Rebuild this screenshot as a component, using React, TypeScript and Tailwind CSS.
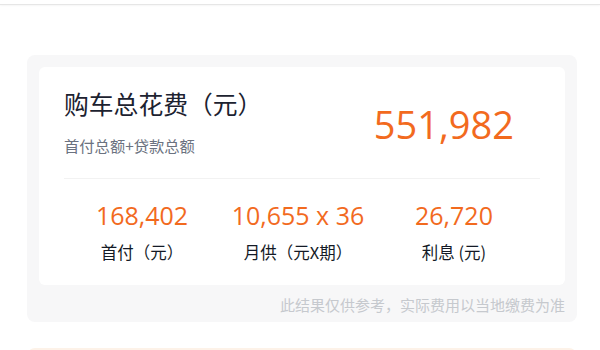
import React from "react";

const cjk = { fontFamily: '"Noto Sans CJK SC", "Noto Sans", sans-serif' };
const num = { fontFamily: '"Open Sans", "Noto Sans", sans-serif' };

export default function App() {
  const cols = [
    { v: "168,402", l: "首付（元）" },
    { v: "10,655 x 36", l: "月供（元X期）" },
    { v: "26,720", l: "利息 (元)" },
  ];
  return (
    <div className="w-[600px] h-[350px] overflow-hidden bg-white" style={cjk}>
      <div className="h-[5px] bg-white border-b border-[#e6e6e6] shadow-[0_1px_2px_rgba(0,0,0,0.04)]" />
      <div className="ml-[27px] mr-[23px] mt-[50px] rounded-[8px] bg-[#f7f7f8] px-[12px] pt-[12px] pb-[7px]">
        <div className="rounded-[6px] bg-white">
          <div className="h-[111px] px-[25px] pt-[20px] flex justify-between">
            <div>
              <div className="text-[24.8px] leading-[32px] text-[#1c2230]">购车总花费（元）</div>
              <div className="mt-[16px] text-[15.3px] leading-[20px] text-[#6b7280]">首付总额+贷款总额</div>
            </div>
            <div className="pr-[26px] pt-[13px] text-[38px] leading-[48px] text-[#f26a1e]" style={num}>
              551,982
            </div>
          </div>
          <div className="mx-[25px] h-px bg-[#f2f2f2]" />
          <div className="grid grid-cols-3 pl-[25px] pr-[33px] pt-[20px] pb-[21px]">
            {cols.map((c) => (
              <div key={c.v} className="flex flex-col items-center">
                <div className="text-[25px] leading-[32px] text-[#f26a1e]" style={num}>
                  {c.v}
                </div>
                <div className="mt-[9px] text-[16.5px] leading-[24px] text-[#141a26]">{c.l}</div>
              </div>
            ))}
          </div>
        </div>
        <div className="mt-[10px] text-right text-[15px] leading-[20px] text-[#c6c9ce]">
          此结果仅供参考，实际费用以当地缴费为准
        </div>
      </div>
      <div className="ml-[27px] mr-[23px] mt-[26px] h-[40px] rounded-[8px] bg-[#fdf2e8]" />
    </div>
  );
}
